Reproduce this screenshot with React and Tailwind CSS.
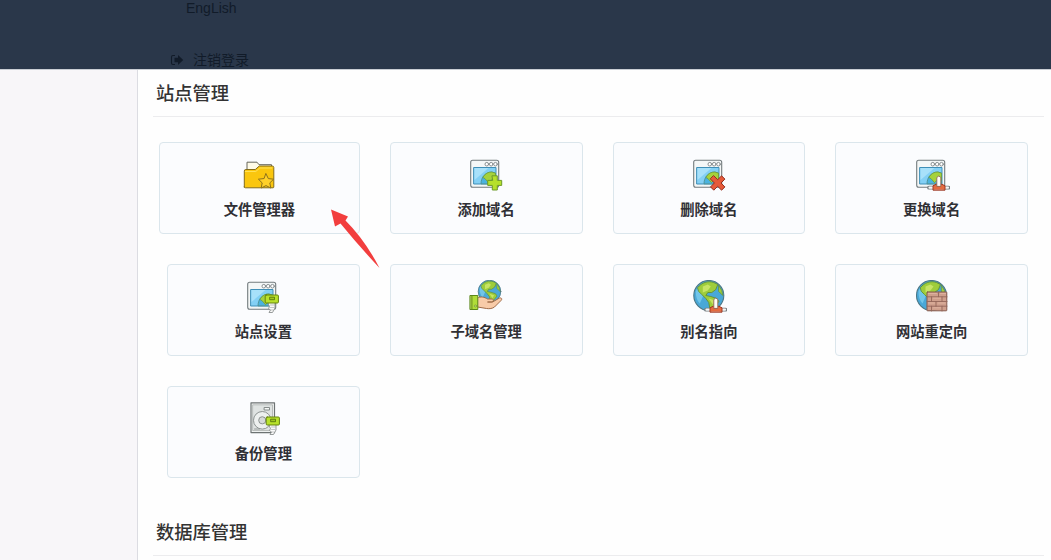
function Svg({ children }) {
  return (
    <svg width="36" height="34" viewBox="-1.5 0 36 34" fill="none" strokeLinejoin="round" strokeLinecap="round">
      {children}
    </svg>
  );
}

function BrowserWindow() {
  return (
    <g>
      <rect x="1.2" y="2.2" width="28" height="27" rx="2" fill="#f4f7f7" stroke="#737b7e" strokeWidth="1.1" />
      <g fill="#fff" stroke="#7e8587" strokeWidth="0.9">
        <circle cx="17.3" cy="6.2" r="1.8" />
        <circle cx="21.7" cy="6.2" r="1.8" />
        <circle cx="26" cy="6.2" r="1.8" />
      </g>
      <rect x="4.5" y="9.5" width="22" height="16.5" fill="#83d0f5" stroke="#3f8fb7" />
      <path d="M5 10h14L5 22z" fill="#a8e1fa" />
      <path d="M11.5 25.5c0-6 4-11 10.5-11.5l4 1v10.5z" fill="#4ab3df" stroke="#4a8a87" strokeWidth="0.8" />
      <path d="M13.5 19c2-3.2 5-5.2 9-5l3.5 1.2v7l-4-.5-3 3-3-3.5z" fill="#a5d23c" stroke="#6a9836" strokeWidth="0.7" />
    </g>
  );
}

function Globe({ cx, cy, r }) {
  return (
    <g transform={`translate(${cx} ${cy}) scale(${r / 15})`}>
      <circle r="15" fill="#49a8d8" stroke="#4b7786" strokeWidth="1.1" />
      <path d="M-13-4C-11-10-6-13 0-14-3-7-6 2-9 8-12 5-13 1-13-4z" fill="#71c5e9" />
      <path d="M-11-8C-7-13-1-15 5-13L9-11 7-6 3-3-1-3-3 0 2 1 8 3 10 6 6 11 4 14 1 13 0 7-3 3-7-1-10-4z" fill="#9ecd3b" stroke="#628e33" strokeWidth="0.9" />
      <path d="M-6-9l5-2 3 2-3 4-5 2zM0 3l6 2-2 4z" fill="#c7e465" />
      <path d="M10-10l3 5 1 5-4-4z" fill="#9ecd3b" stroke="#628e33" strokeWidth="0.7" />
    </g>
  );
}

function Connector({ x = 0 }) {
  return (
    <g transform={`translate(${x} 0)`}>
      <path d="M22 22.5h6.5V28l-2.5 4.5h-3.5l1.5-2.5-2-1.5 1-2-1-2z" fill="#fafafa" stroke="#8c9191" strokeWidth="0.9" />
      <path d="M24 25h4M24 27.5h3.5M24 30h2.5" stroke="#aaaead" strokeWidth="0.7" />
      <rect x="18.7" y="15" width="13.2" height="8" rx="1" fill="#b8e22b" stroke="#64830e" />
      <rect x="23.5" y="17.2" width="4.5" height="2.5" fill="#9cc71e" stroke="#516b0b" strokeWidth="0.8" />
    </g>
  );
}

function Redirector() {
  return (
    <g>
      <path d="M13.5 29.7h4.5M28.5 29.7H33" stroke="#777d80" strokeWidth="3.8" />
      <path d="M14 29.7h4M29 29.7h3.5" stroke="#f6f8f8" strokeWidth="2.2" />
      <path d="M17.5 31.8v-4l3-1.5h6l3 1.5v4z" fill="#e46b40" stroke="#9f3822" />
      <path d="M21.3 28v-8.5l2-1.5 2 1.5V28z" fill="#fffdf8" stroke="#916a58" strokeWidth="0.9" />
    </g>
  );
}

function FolderIcon() {
  return (
    <Svg>
      <path d="M4.5 12V4.2h10l2 2.5H29v6" fill="#fffbe7" stroke="#66665a" />
      <path d="M1.8 29V13q0-1.5 1.5-1.5h9.5l4-3.5h13q1.5 0 1.5 1.5V29q0 .8-.8.8H3q-1.2 0-1.2-.8z" fill="#fac60e" stroke="#836c1c" />
      <path d="M2.8 13.5h10.5l4-3.5h12" stroke="#ffe257" />
      <path d="M23.5 15.8l2.3 4.8 5.3.6-3.8 3.7 1 5.1-4.8-2.4-4.8 2.4 1-5.1-3.8-3.7 5.3-.6z" fill="#ffd029" stroke="#8c711b" />
    </Svg>
  );
}

function AddIcon() {
  return (
    <Svg>
      <BrowserWindow />
      <path d="M22.8 17.8h5v4.6h4.4v5h-4.4V32h-5v-4.6h-4.6v-5h4.6z" fill="#b6e02b" stroke="#6d9a28" />
    </Svg>
  );
}

function DeleteIcon() {
  return (
    <Svg>
      <BrowserWindow />
      <path d="M21.3 17.8l3.9 3.9 3.9-3.9 3.3 3.3-3.9 3.9 3.9 3.9-3.3 3.3-3.9-3.9-3.9 3.9-3.3-3.3 3.9-3.9-3.9-3.9z" fill="#e65a39" stroke="#933020" />
    </Svg>
  );
}

function ReplaceIcon() {
  return <Svg><BrowserWindow /><Redirector /></Svg>;
}

function SettingsIcon() {
  return <Svg><BrowserWindow /><Connector /></Svg>;
}

function SubdomainIcon() {
  return (
    <Svg>
      <Globe cx={20} cy={11.5} r={11.3} />
      <path d="M8 18c3-2 7-1 10 1h5c1.5 1 1 2.8-1 3h-4 5l7-4c2-.5 3 1 1.5 2.5L25 27c-2 1.5-5 2-8 1.5L8 27z" fill="#f8cba8" stroke="#a06c49" />
      <path d="M0.8 15.5h7.5v14H0.8z" fill="#b0dd38" stroke="#5c871a" />
      <path d="M1.2 16h2v13h-2z" fill="#86ad2c" />
      <circle cx="5.8" cy="26" r="1" fill="#e5f3a6" stroke="#618820" strokeWidth="0.6" />
    </Svg>
  );
}

function AliasIcon() {
  return <Svg><Globe cx={16.3} cy={15.5} r={15} /><Redirector /></Svg>;
}

function FirewallIcon() {
  return (
    <Svg>
      <Globe cx={16} cy={15.5} r={15} />
      <rect x="11.5" y="12" width="19.8" height="18.8" rx="0.6" fill="#cf9f8c" stroke="#865a4d" />
      <path d="M11.5 16.8h20M11.5 21.5h20M11.5 26.2h20M23 12v4.8M16 16.8v4.7M26.5 16.8v4.7M20.5 21.5v4.7M16 26.2V31M26.5 26.2V31" stroke="#94675a" strokeWidth="0.9" />
      <path d="M13 13.5h8M25 13.5h5M18 18.2h7M13 23h6M22.5 23h7M18 27.8h7" stroke="#e2b8a5" strokeWidth="0.8" />
    </Svg>
  );
}

function BackupIcon() {
  return (
    <Svg>
      <rect x="4.5" y="0.8" width="23.5" height="29.8" fill="#f5f7f6" stroke="#6d7373" strokeWidth="1.2" />
      <rect x="6.5" y="2.8" width="19.5" height="25.8" fill="#dfe3e2" stroke="#a0a5a4" strokeWidth="0.7" />
      <circle cx="15.8" cy="18.3" r="8.8" fill="#edf0ef" stroke="#8d9392" />
      <circle cx="15.8" cy="18.3" r="3.6" fill="#d6dad9" stroke="#8d9392" />
      <path d="M18 5.5h5v2.5h-5z" fill="#f5f7f6" stroke="#7c8281" strokeWidth="0.9" />
      <path d="M8 27h5" stroke="#8c9291" strokeWidth="0.9" />
      <Connector x={1} />
    </Svg>
  );
}

const tools = [
  ["文件管理器", FolderIcon],
  ["添加域名", AddIcon],
  ["删除域名", DeleteIcon],
  ["更换域名", ReplaceIcon],
  ["站点设置", SettingsIcon],
  ["子域名管理", SubdomainIcon],
  ["别名指向", AliasIcon],
  ["网站重定向", FirewallIcon],
  ["备份管理", BackupIcon],
];

function SectionTitle({ children }) {
  return (
    <h2 className="ml-[15px] mr-[7px] h-[47px] border-b border-[#ececee] pl-[3px] pt-[10px] text-[18.3px] font-medium leading-[28px] text-[#333]">
      {children}
    </h2>
  );
}

export default function App() {
  return (
    <div className="relative flex h-[560px] w-[1051px] flex-col overflow-hidden bg-[#fefefe] font-['Liberation_Sans','Noto_Sans_CJK_SC',sans-serif]">
      <header className="flex h-[69px] shrink-0 flex-col bg-[#2a374a] pl-[170px] text-[14px] leading-[18px] text-[#111b29]">
        <span className="-mt-px pl-[16px]">EngLish</span>
        <span className="mt-auto flex items-center gap-[9px]">
          <svg width="14" height="12" viewBox="0 0 14 12" fill="none">
            <path d="M5 1.5H3Q1.5 1.5 1.5 3v6Q1.5 10.5 3 10.5h2" stroke="currentColor" strokeWidth="1.1" />
            <path d="M4.5 3.8H8V1L13.2 6 8 11V8.2H4.5z" fill="currentColor" />
          </svg>
          注销登录
        </span>
      </header>
      <div className="flex min-h-0 flex-1 shadow-[inset_0_1px_0_#c9ced4]">
        <aside className="mt-px w-[138px] shrink-0 border-r border-[#dcdce2] bg-[#f8f6f9]" />
        <main className="min-w-0 flex-1 pt-px">
          <SectionTitle>站点管理</SectionTitle>
          <div className="ml-[29px] mr-[23px] mt-[25px] grid grid-cols-4 gap-[30px]">
            {tools.map(([label, Icon]) => (
              <div
                key={label}
                className="flex h-[92px] flex-col items-center rounded-[4px] border border-[#dbe6ec] bg-[#fbfcfe] pt-[15px] first:-ml-[8px]"
              >
                <Icon />
                <span className="mt-[7px] text-[14.3px] font-bold leading-[22px] text-[#303035]">{label}</span>
              </div>
            ))}
          </div>
          <div className="mt-[31px]">
            <SectionTitle>数据库管理</SectionTitle>
          </div>
        </main>
      </div>
      <svg className="absolute left-[328px] top-[206px]" width="54" height="64" viewBox="328 206 54 64">
        <path d="M331 209.5L348 216.5L345.5 220.5Q365 240 379.5 268Q358 245 340.5 223.5L335 226.5Z" fill="#f23e3e" />
      </svg>
    </div>
  );
}
